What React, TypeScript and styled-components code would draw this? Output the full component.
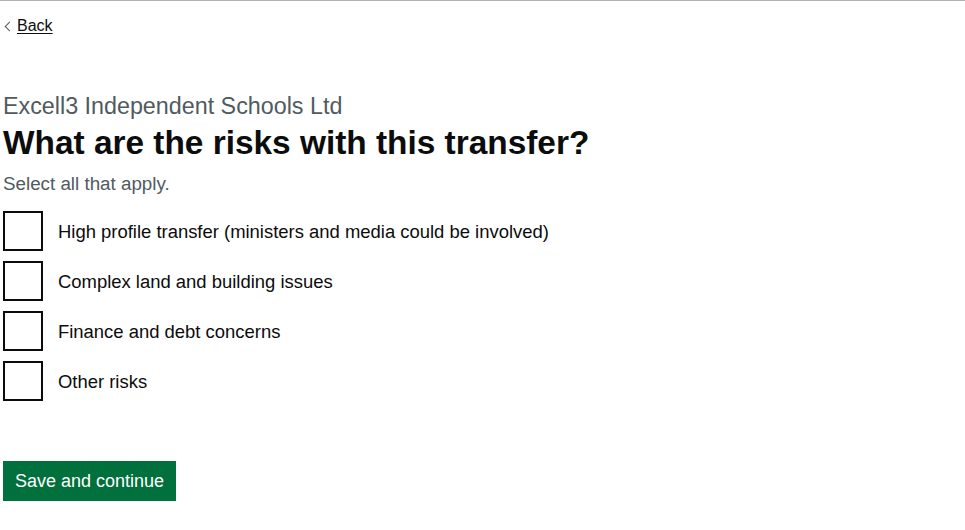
import React from "react";
import styled, { createGlobalStyle } from "styled-components";

const Global = createGlobalStyle`
  html, body { margin: 0; padding: 0; background: #fff; }
  body { font-family: "Liberation Sans", Arial, sans-serif; color: #0b0c0c; -webkit-font-smoothing: antialiased; }
`;

const TopRule = styled.div`
  border-top: 1px solid #b1b4b6;
`;

const Page = styled.div`
  padding: 0 3px;
`;

const BackLink = styled.a`
  position: relative;
  display: inline-block;
  margin-top: 15px;
  padding-left: 14px;
  font-size: 16px;
  line-height: 1.25;
  color: #0b0c0c;
  text-decoration: underline;
  text-underline-offset: 0.1em;
  &::before {
    content: "";
    position: absolute;
    left: 3px;
    top: 0;
    bottom: 0;
    margin: auto;
    width: 6px;
    height: 6px;
    border: solid #505a5f;
    border-width: 1px 1px 0 0;
    transform: rotate(225deg);
  }
`;

const Main = styled.main`
  padding-top: 58px;
`;

const Caption = styled.span`
  display: block;
  font-size: 23.3px;
  line-height: 25px;
  color: #505a5f;
  margin-bottom: 5px;
`;

const Heading = styled.h1`
  margin: 0 0 9px;
  font-size: 33.4px;
  line-height: 38px;
  font-weight: 700;
`;

const Hint = styled.div`
  font-size: 18.8px;
  line-height: 25px;
  color: #505a5f;
  margin-bottom: 15px;
`;

const List = styled.div`
  display: flex;
  flex-direction: column;
  gap: 10px;
`;

const Item = styled.label`
  display: flex;
  align-items: center;
  min-height: 40px;
  cursor: pointer;
`;

const Box = styled.span`
  box-sizing: border-box;
  width: 40px;
  height: 40px;
  border: 2px solid #0b0c0c;
  flex: none;
`;

const Label = styled.span`
  padding-left: 15px;
  font-size: 18.45px;
  line-height: 25px;
`;

const Button = styled.button`
  margin-top: 60px;
  font-family: inherit;
  font-size: 18px;
  line-height: 19px;
  padding: 9px 10px 8px;
  border: 2px solid transparent;
  border-radius: 0;
  color: #fff;
  background: #00703c;
  box-shadow: 0 2px 0 #002d18;
  cursor: pointer;
`;

const options = [
  "High profile transfer (ministers and media could be involved)",
  "Complex land and building issues",
  "Finance and debt concerns",
  "Other risks",
];

export default function App() {
  return (
    <>
      <Global />
      <TopRule />
      <Page>
        <BackLink href="#">Back</BackLink>
        <Main>
          <Caption>Excell3 Independent Schools Ltd</Caption>
          <Heading>What are the risks with this transfer?</Heading>
          <Hint>Select all that apply.</Hint>
          <List>
            {options.map((o) => (
              <Item key={o}>
                <Box />
                <Label>{o}</Label>
              </Item>
            ))}
          </List>
          <Button>Save and continue</Button>
        </Main>
      </Page>
    </>
  );
}
